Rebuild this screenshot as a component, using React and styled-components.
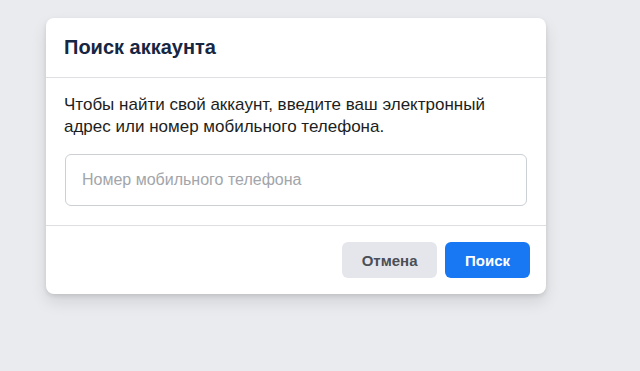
import React from "react";
import styled, { createGlobalStyle } from "styled-components";

const GlobalStyle = createGlobalStyle`
  html, body {
    margin: 0;
    background: #e9ebee;
    font-family: "Liberation Sans", Arial, sans-serif;
  }
`;

const Page = styled.div`
  min-height: 371px;
  padding: 18px 0 0 46px;
  box-sizing: border-box;
`;

const Card = styled.div`
  width: 500px;
  background: #fff;
  border-radius: 8px;
  box-shadow: 0 2px 4px rgba(0, 0, 0, 0.1), 0 8px 16px rgba(0, 0, 0, 0.1);
`;

const Header = styled.div`
  padding: 0 18px;
  height: 60px;
  box-sizing: border-box;
  display: flex;
  align-items: center;
  border-bottom: 1px solid #dddfe2;
`;

const Title = styled.h2`
  margin: 0;
  font-size: 20px;
  font-weight: bold;
  color: #162643;
`;

const Body = styled.div`
  padding: 16px 19px 19px 19px;
  border-bottom: 1px solid #dddfe2;
`;

const Text = styled.p`
  margin: 0 0 16px -1px;
  font-size: 17px;
  line-height: 22px;
  color: #1c1e21;
`;

const Input = styled.input`
  display: block;
  width: 100%;
  height: 52px;
  box-sizing: border-box;
  border: 1px solid #ccd0d5;
  border-radius: 6px;
  padding: 0 16px;
  font-family: inherit;
  font-size: 16px;
  color: #1c1e21;
  &::placeholder {
    color: #a2a5aa;
  }
`;

const Footer = styled.div`
  display: flex;
  justify-content: flex-end;
  gap: 8px;
  padding: 16px 16px 16px;
`;

const Button = styled.button`
  height: 36px;
  padding: 0 ${({ $primary }) => ($primary ? "20px" : "19.5px")};
  border: none;
  border-radius: 6px;
  font-family: inherit;
  font-size: 15px;
  font-weight: bold;
  background: ${({ $primary }) => ($primary ? "#1877f2" : "#e4e6eb")};
  color: ${({ $primary }) => ($primary ? "#fff" : "#4b4f56")};
  cursor: pointer;
`;

export default function App() {
  return (
    <>
      <GlobalStyle />
      <Page>
        <Card>
          <Header>
            <Title>Поиск аккаунта</Title>
          </Header>
          <Body>
            <Text>
              Чтобы найти свой аккаунт, введите ваш электронный адрес или номер
              мобильного телефона.
            </Text>
            <Input placeholder="Номер мобильного телефона" />
          </Body>
          <Footer>
            <Button>Отмена</Button>
            <Button $primary>Поиск</Button>
          </Footer>
        </Card>
      </Page>
    </>
  );
}
